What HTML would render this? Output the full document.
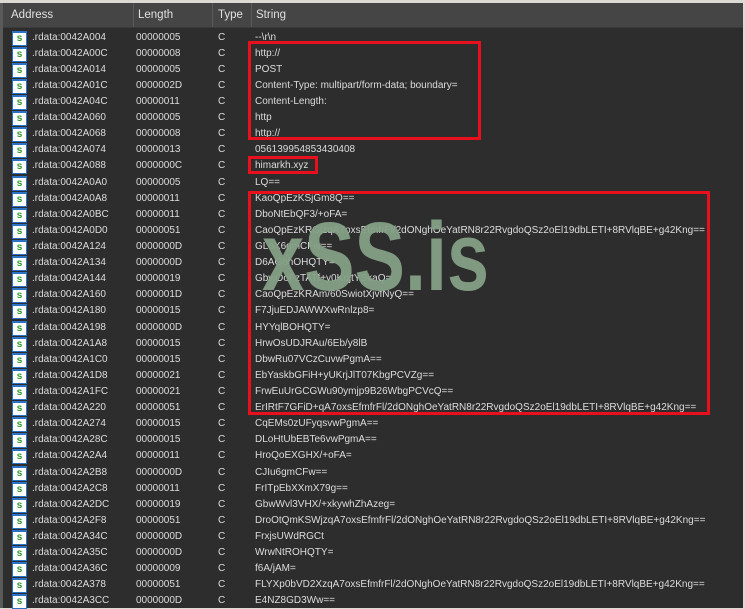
<!DOCTYPE html><html><head><style>
body{margin:0;width:745px;height:608px;background:#dcdad5;overflow:hidden;position:relative;font-family:"Liberation Sans",Tahoma,sans-serif;font-size:10px}
#win{position:absolute;left:0;top:3px;width:743px;height:605px;background:#2d2d2d;border-left:3px solid #5a5a5a;box-sizing:border-box}
#hdr{position:absolute;left:0;top:0;right:0;height:24px;background:#454545;border-bottom:1px solid #3a3a3a;color:#e0e0e0;font-size:11.5px}
#hdr span{position:absolute;top:6px}
.dv{position:absolute;top:0;width:1px;height:24px;background:#5a5a5a}
.r{position:absolute;left:0;height:16px;color:#dcdcdc;white-space:nowrap;line-height:16px}
.r span{position:absolute;top:0}
.ic{position:absolute;left:9px;top:1px;width:13px;height:12px;background:#fff;border:1px solid #2a73c8;border-top-width:2px;color:#2a9a2a;font-weight:bold;font-size:10px;line-height:11px;text-align:center}
.box{position:absolute;border:3px solid #e8101c;box-sizing:border-box}
#wm{position:absolute;left:262px;top:208px;font-size:97px;line-height:97px;font-weight:bold;color:rgba(132,160,134,0.95);transform:scaleX(0.78);transform-origin:left top}
</style></head><body><div id="win">
<div id="hdr"><span style="left:8px">Address</span><div class="dv" style="left:130px"></div><span style="left:135px">Length</span><div class="dv" style="left:209px"></div><span style="left:215px">Type</span><div class="dv" style="left:248px"></div><span style="left:253px">String</span></div>
<div id="rows"></div>
</div>
<div id="wm">xSS.is</div>
<div class="box" style="left:248px;top:41px;width:233px;height:99px"></div>
<div class="box" style="left:248px;top:156px;width:70px;height:18px"></div>
<div class="box" style="left:248px;top:191px;width:462px;height:224px"></div>
<script>
var d=[["A004","00000005","--\\r\\n"],["A00C","00000008","http://"],["A014","00000005","POST"],["A01C","0000002D","Content-Type: multipart/form-data; boundary="],["A04C","00000011","Content-Length:"],["A060","00000005","http"],["A068","00000008","http://"],["A074","00000013","056139954853430408"],["A088","0000000C","himarkh.xyz"],["A0A0","00000005","LQ=="],["A0A8","00000011","KaoQpEzKSjGm8Q=="],["A0BC","00000011","DboNtEbQF3/+oFA="],["A0D0","00000051","CaoQpEzKRGjzqA7oxsEfmfrFl/2dONghOeYatRN8r22RvgdoQSz2oEl19dbLETI+8RVlqBE+g42Kng=="],["A124","0000000D","GLoX6gmCFw=="],["A134","0000000D","D6AGohOHQTY="],["A144","00000019","GbwOoFzTATf+y0KojtYSkaQ="],["A160","0000001D","CaoQpEzKRAm/60SwiotXjvfNyQ=="],["A180","00000015","F7JjuEDJAWWXwRnlzp8="],["A198","0000000D","HYYqlBOHQTY="],["A1A8","00000015","HrwOsUDJRAu/6Eb/y8lB"],["A1C0","00000015","DbwRu07VCzCuvwPgmA=="],["A1D8","00000021","EbYaskbGFiH+yUKrjJlT07KbgPCVZg=="],["A1FC","00000021","FrwEuUrGCGWu90ymjp9B26WbgPCVcQ=="],["A220","00000051","ErIRtF7GFiD+qA7oxsEfmfrFl/2dONghOeYatRN8r22RvgdoQSz2oEl19dbLETI+8RVlqBE+g42Kng=="],["A274","00000015","CqEMs0zUFyqsvwPgmA=="],["A28C","00000015","DLoHtUbEBTe6vwPgmA=="],["A2A4","00000011","HroQoEXGHX/+oFA="],["A2B8","0000000D","CJIu6gmCFw=="],["A2C8","00000011","FrITpEbXXmX79g=="],["A2DC","00000019","GbwWvl3VHX/+xkywhZhAzeg="],["A2F8","00000051","DroOtQmKSWjzqA7oxsEfmfrFl/2dONghOeYatRN8r22RvgdoQSz2oEl19dbLETI+8RVlqBE+g42Kng=="],["A34C","0000000D","FrxjsUWdRGCt"],["A35C","0000000D","WrwNtROHQTY="],["A36C","00000009","f6A/jAM="],["A378","00000051","FLYXp0bVD2XzqA7oxsEfmfrFl/2dONghOeYatRN8r22RvgdoQSz2oEl19dbLETI+8RVlqBE+g42Kng=="],["A3CC","0000000D","E4NZ8GD3Ww=="]];
var h="";d.forEach(function(e,i){var t=26.5+i*16.11;h+='<div class="r" style="top:'+t.toFixed(1)+'px;width:740px"><div class="ic">s</div><span style="left:29px">.rdata:0042'+e[0]+'</span><span style="left:133px">'+e[1]+'</span><span style="left:215px">C</span><span style="left:252px">'+e[2].replace(/</g,"&lt;")+'</span></div>'});
document.getElementById("rows").innerHTML=h;
</script>
</body></html>
